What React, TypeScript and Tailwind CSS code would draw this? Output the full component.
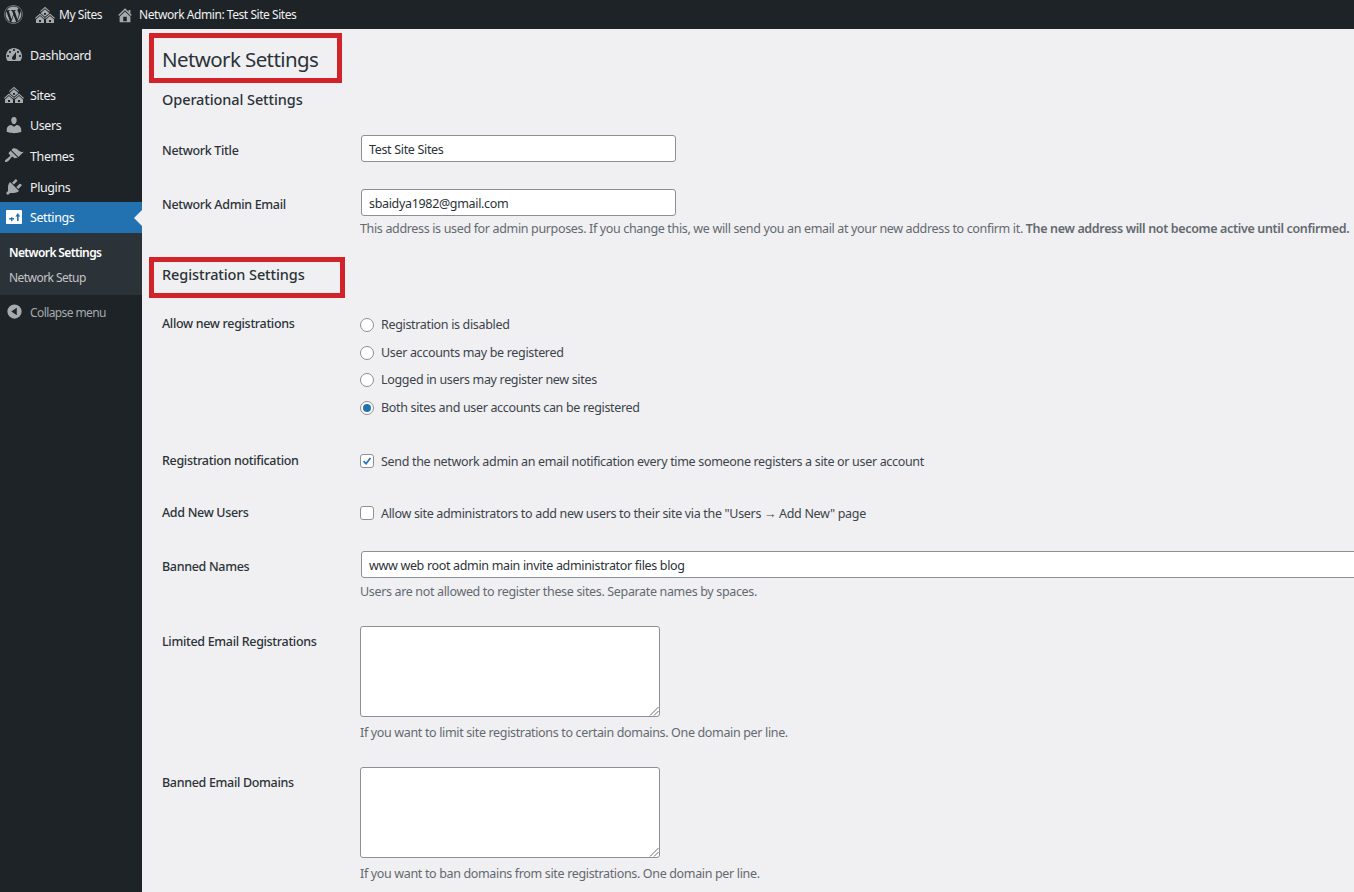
import React from "react";
import { FaWordpress } from "react-icons/fa";

function Dash({ d, className }: { d: string; className?: string }) {
  return (
    <svg viewBox="0 0 20 20" className={className} fill="currentColor">
      <path d={d} fillRule="evenodd" />
    </svg>
  );
}

const MULTISITE = "M14.27 6.87L10 3.14 5.73 6.87 5 6.14l5-4.38 5 4.38zM14 8.42l-4.05 3.43L6 8.38v-.74l4-3.5 4 3.5v.78zM11 9.7V8H9v1.7h2zm-1.73 4.03L5 10 .73 13.73 0 13l5-4.38L10 13zm10 0L15 10l-4.27 3.73L10 13l5-4.38L20 13zM5 11l4 3.5V18H1v-3.5zm10 0l4 3.5V18h-8v-3.5zM6 17v-2H4v2h2zm10 0v-2h-2v2h2z";
const DASHBOARD = "M3.76 16h12.48c1.1-1.37 1.76-3.11 1.76-5 0-4.42-3.58-8-8-8s-8 3.58-8 8c0 1.89.66 3.63 1.76 5zM10 4c.55 0 1 .45 1 1s-.45 1-1 1-1-.45-1-1 .45-1 1-1zM6 6c.55 0 1 .45 1 1s-.45 1-1 1-1-.45-1-1 .45-1 1-1zm8 0c.55 0 1 .45 1 1s-.45 1-1 1-1-.45-1-1 .45-1 1-1zm-5.37 5.55L12 7v6c0 1.1-.9 2-2 2s-2-.9-2-2c0-.57.24-1.08.63-1.45zM4 10c.55 0 1 .45 1 1s-.45 1-1 1-1-.45-1-1 .45-1 1-1zm12 0c.55 0 1 .45 1 1s-.45 1-1 1-1-.45-1-1 .45-1 1-1z";
const USERS = "M10 9.25c-2.27 0-2.73-3.44-2.73-3.44C7 4.02 7.82 2 9.97 2c2.16 0 2.98 2.02 2.71 3.81 0 0-.41 3.44-2.68 3.44zm0 2.57L12.72 10c2.39 0 4.52 2.33 4.52 4.53v2.49s-3.65 1.13-7.24 1.13c-3.65 0-7.24-1.13-7.24-1.13v-2.49c0-2.25 1.94-4.48 4.47-4.48z";
const THEMES = "M14.48 11.06L7.41 3.99l1.5-1.5c.5-.56 2.3-.47 3.51.32 1.21.8 1.43 1.28 2.91 2.1 1.18.64 2.45 1.26 4.45.85zm-.71.71L6.7 4.7 4.93 6.47c-.39.39-.39 1.02 0 1.41l1.06 1.06c.39.39.39 1.03 0 1.42-.6.6-1.43 1.11-2.21 1.69-.35.26-.7.53-1.01.84C1.43 13.23.4 14.98 1.2 15.8c.8.8 2.57-.23 3.91-1.57.31-.31.58-.66.85-1.02.57-.78 1.08-1.61 1.69-2.21.39-.39 1.02-.39 1.41 0l1.06 1.06c.39.39 1.02.39 1.41 0z";
const PLUGINS = "M13.11 4.36L9.87 7.6 8 5.73l3.24-3.24c.35-.34 1.05-.2 1.56.32.52.51.66 1.21.31 1.55zm-8 1.77l.91-1.12 9.01 9.01-1.19.84c-.71.71-2.63 1.16-3.82 1.16H6.14L4.9 17.26c-.59.59-1.54.59-2.12 0-.59-.58-.59-1.53 0-2.12l1.24-1.24v-3.88c0-1.13.4-3.19 1.09-3.89zm7.26 3.97l3.24-3.24c.34-.35 1.04-.21 1.55.31.52.51.66 1.21.31 1.55l-3.24 3.25z";
const SETTINGS = "M18 16V4c0-.55-.45-1-1-1H3c-.55 0-1 .45-1 1v12c0 .55.45 1 1 1h14c.55 0 1-.45 1-1zM7 14.2v-1.7H5.2v-1.4H7v-.9h1.4v.9H10v1.4H8.4v1.7zM13 14V9.4h-1.6L13.8 6l2.4 3.4h-1.6V14z";
const HOME = "M16 8.5l1.53 1.53-1.06 1.06L10 4.62l-6.47 6.47-1.06-1.06L10 2.5l4 4v-2h2v4zm-6-2.46l6 5.99V18H4v-6.03zM12 17v-5H8v5h4z";
const COLLAPSE = "M10 2.5a7.5 7.5 0 1 1 0 15 7.5 7.5 0 0 1 0-15zm2.4 3.6L6.6 10l5.8 3.9z";

function MenuItem({ d, label, active, className }: { d: string; label: string; active?: boolean; className?: string }) {
  return (
    <div className={`relative flex h-[30.7px] items-center ${active ? "bg-[#2271b1] text-white" : "text-[#f0f0f1]"} ${className ?? ""}`}>
      <span className={`flex w-[30px] shrink-0 justify-center pr-[2px] ${active ? "text-white" : "text-[#a7aaad]"}`}>
        <Dash d={d} className="h-[20px] w-[20px]" />
      </span>
      <span className="pt-[3px] text-[12.5px] tracking-[-0.4px]">{label}</span>
      {active && <span className="absolute right-0 top-[8px] h-0 w-0 border-y-[8px] border-r-[8px] border-y-transparent border-r-[#f0f0f1]" />}
    </div>
  );
}

function Label({ children, className }: { children: React.ReactNode; className?: string }) {
  return <div className={`w-[198px] shrink-0 text-[12.5px] font-medium leading-[20px] tracking-[-0.32px] text-[#2c3338] ${className ?? ""}`}>{children}</div>;
}

function TextInput({ value, className }: { value: string; className?: string }) {
  return (
    <div className={`ml-px flex h-[27px] shrink-0 items-center rounded-[3px] border border-[#8c8f94] bg-white px-[7px] pt-[4px] text-[12.5px] tracking-[-0.33px] text-[#2c3338] ${className ?? ""}`}>
      {value}
    </div>
  );
}

function Desc({ children, className }: { children: React.ReactNode; className?: string }) {
  return <div className={`ml-[198px] h-[18px] whitespace-nowrap text-[12.5px] leading-[20px] tracking-[-0.345px] text-[#646970] ${className ?? ""}`}>{children}</div>;
}

function Radio({ label, checked }: { label: string; checked?: boolean }) {
  return (
    <div className="flex h-[27.7px] items-center gap-[7px] pt-[2px] text-[12.5px] tracking-[-0.33px] text-[#3c434a]">
      <span className="flex h-[14px] w-[14px] items-center justify-center rounded-full border border-[#8c8f94] bg-white">
        {checked && <span className="h-[8px] w-[8px] rounded-full bg-[#2271b1]" />}
      </span>
      <span className="pt-px">{label}</span>
    </div>
  );
}

function Checkbox({ label, checked }: { label: string; checked?: boolean }) {
  return (
    <div className="mt-px flex h-[18px] items-center gap-[7px] pt-[1px] text-[12.5px] tracking-[-0.325px] text-[#3c434a]">
      <span className="flex h-[14px] w-[14px] items-center justify-center rounded-[3px] border border-[#8c8f94] bg-white">
        {checked && (
          <svg viewBox="0 0 14 14" className="h-[14px] w-[14px]" fill="none" stroke="#2271b1" strokeWidth="2">
            <path d="M3 7.2 5.9 10.2 11 3.6" />
          </svg>
        )}
      </span>
      <span className="pt-[2px]">{label}</span>
    </div>
  );
}

function TextArea() {
  return (
    <div className="relative h-[91px] w-[300px] rounded-[3px] border border-[#8c8f94] bg-white">
      <svg viewBox="0 0 10 10" className="absolute bottom-0 right-0 h-[10px] w-[10px]" stroke="#6b6b6b" strokeWidth="1">
        <path d="M1 9.5 9.5 1M5 9.5 9.5 5" />
      </svg>
    </div>
  );
}

export default function App() {
  return (
    <div className="flex h-[892px] w-[1354px] flex-col overflow-hidden bg-[#f0f0f2] font-['Noto_Sans','Open_Sans',sans-serif]">
      <header className="flex h-[29px] shrink-0 items-center bg-[#1d2327] text-[12px] tracking-[-0.45px] text-[#f0f0f1]">
        <FaWordpress className="ml-[4px] h-[19px] w-[19px] text-[#a7aaad]" />
        <Dash d={MULTISITE} className="ml-[12px] h-[20px] w-[20px] text-[#a7aaad]" />
        <span className="ml-[4px]">My Sites</span>
        <Dash d={HOME} className="ml-[14px] h-[18px] w-[18px] text-[#a7aaad]" />
        <span className="ml-[5px]">Network Admin: Test Site Sites</span>
      </header>
      <div className="flex min-h-0 flex-1">
        <aside className="w-[142px] shrink-0 bg-[#1d2327]">
          <MenuItem className="mt-[11px]" label="Dashboard" d={DASHBOARD} />
          <MenuItem className="mt-[8.5px]" label="Sites" d={MULTISITE} />
          <MenuItem label="Users" d={USERS} />
          <MenuItem label="Themes" d={THEMES} />
          <MenuItem label="Plugins" d={PLUGINS} />
          <MenuItem active label="Settings" d={SETTINGS} />
          <div className="flex h-[62px] flex-col bg-[#2c3338] pl-[9px] pt-[8px] text-[12px]">
            <div className="flex h-[25px] items-center font-semibold tracking-[-0.6px] text-white">Network Settings</div>
            <div className="flex h-[25px] items-center tracking-[-0.55px] text-[#c3c4c7]">Network Setup</div>
          </div>
          <div className="mt-px flex h-[31px] items-center text-[12px] tracking-[-0.6px] text-[#a7aaad]">
            <Dash d={COLLAPSE} className="ml-[5px] h-[19px] w-[19px]" />
            <span className="ml-[6px] pt-[3px]">Collapse menu</span>
          </div>
        </aside>
        <main className="min-w-0 flex-1 overflow-hidden pl-[7px]">
          <div className="mt-[4px] flex h-[50px] w-[193px] items-center whitespace-nowrap border-[5px] border-[#d2232a] pl-[8px] pt-[2px] text-[20.5px] tracking-[-0.6px] text-[#2c3338]">
            Network Settings
          </div>
          <div className="pl-[13px]">
            <h2 className="mt-[6px] text-[14.5px] font-medium leading-[20px] tracking-[-0.1px] text-[#2c3338]">Operational Settings</h2>
            <div className="mt-[26px] flex items-start">
              <Label className="pt-[6px]">Network Title</Label>
              <TextInput value="Test Site Sites" className="w-[315px]" />
            </div>
            <div className="mt-[27px] flex items-start">
              <Label className="pt-[6px]">Network Admin Email</Label>
              <TextInput value="sbaidya1982@gmail.com" className="w-[315px]" />
            </div>
            <Desc className="mt-[3px]">
              This address is used for admin purposes. If you change this, we will send you an email at your new address to confirm it. <b className="font-semibold">The new address will not become active until confirmed.</b>
            </Desc>
          </div>
          <div className="mt-[20px] flex h-[41px] w-[196px] items-center whitespace-nowrap border-[5px] border-[#d2232a] pb-[5px] pl-[8px] text-[14.5px] font-medium tracking-[-0.1px] text-[#2c3338]">
            Registration Settings
          </div>
          <div className="pl-[13px]">
            <div className="mt-[12px] flex items-start">
              <Label className="pt-[4px]">Allow new registrations</Label>
              <div>
                <Radio label="Registration is disabled" />
                <Radio label="User accounts may be registered" />
                <Radio label="Logged in users may register new sites" />
                <Radio checked label="Both sites and user accounts can be registered" />
              </div>
            </div>
            <div className="mt-[30.2px] flex items-start">
              <Label>Registration notification</Label>
              <Checkbox checked label="Send the network admin an email notification every time someone registers a site or user account" />
            </div>
            <div className="mt-[32px] flex items-start">
              <Label>Add New Users</Label>
              <Checkbox label={'Allow site administrators to add new users to their site via the "Users \u2192 Add New" page'} />
            </div>
            <div className="mt-[28px] flex items-start">
              <Label className="pt-[6px]">Banned Names</Label>
              <TextInput value="www web root admin main invite administrator files blog" className="w-[1020px]" />
            </div>
            <Desc className="mt-[4px]">Users are not allowed to register these sites. Separate names by spaces.</Desc>
            <div className="mt-[26px] flex items-start">
              <Label className="pt-[6px]">Limited Email Registrations</Label>
              <TextArea />
            </div>
            <Desc className="mt-[6px]">If you want to limit site registrations to certain domains. One domain per line.</Desc>
            <div className="mt-[26px] flex items-start">
              <Label className="pt-[6px]">Banned Email Domains</Label>
              <TextArea />
            </div>
            <Desc className="mt-[6px]">If you want to ban domains from site registrations. One domain per line.</Desc>
          </div>
        </main>
      </div>
    </div>
  );
}
